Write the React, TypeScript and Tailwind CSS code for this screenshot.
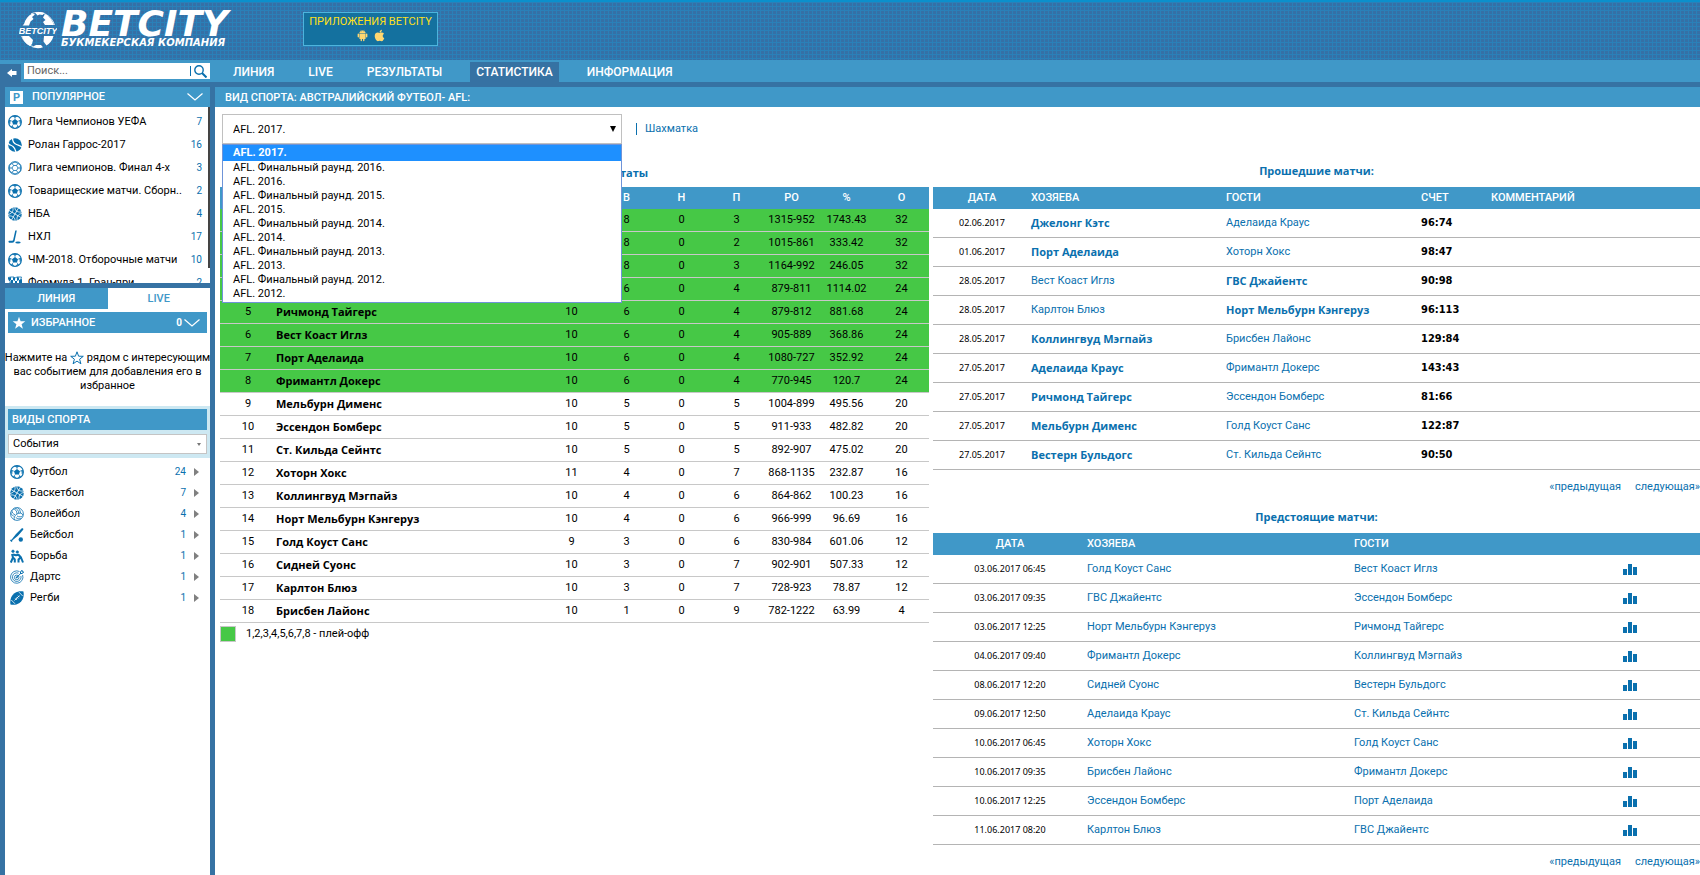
import type { ReactNode } from "react";
import { AiFillAndroid } from "react-icons/ai";
import { FaApple } from "react-icons/fa";

type IconProps = { className?: string };

function Soccer({ className = "" }: IconProps) {
  return (
    <svg viewBox="0 0 14 14" className={className} fill="none" stroke="#0a70ae">
      <circle cx="7" cy="7" r="6.4" strokeWidth="1.1" />
      <path d="M7 4 10 6.2 8.900 9.500H5.100L4 6.200Z" fill="#0a70ae" stroke="none" />
      <path d="M7 4V2M10 6.200 12 5.400M8.900 9.500 10 11.200M5.100 9.500 4 11.200M4 6.200 2 5.400" strokeWidth=".6" />
      <path d="M4.8 1.2 7 2.4 9.2 1.2ZM13 5 11.6 5.6 12.2 9ZM10.8 11.8 9.7 10.9 8.2 13ZM3.2 11.8 4.3 10.9 5.8 13ZM1 5 2.4 5.6 1.8 9Z" fill="#0a70ae" strokeWidth=".5" />
    </svg>
  );
}

function Tennis({ className = "" }: IconProps) {
  return (
    <svg viewBox="0 0 14 14" className={className} fill="none">
      <circle cx="7" cy="7" r="6.8" fill="#0a70ae" />
      <path d="M4.500 0C4.500 4 6 5.500 8.500 6.500s5 1.500 5.500 3M0 5c1 2 3 2 5 3.500S7.500 12 8 14" stroke="#fff" strokeWidth="1.300" />
    </svg>
  );
}

function Futsal({ className = "" }: IconProps) {
  return (
    <svg viewBox="0 0 14 14" className={className} fill="none" stroke="#0a70ae" strokeWidth=".8">
      <circle cx="7" cy="7" r="6.4" />
      <path d="M5.500 4.500h3L10 7 8.500 9.500h-3L4 7ZM5.500 4.500 4 2.300M8.500 4.500 10 2.300M10 7h2.400M8.500 9.500 10 11.700M5.500 9.500 4 11.700M4 7H1.600M4 2.300 7 1l3 1.300 2.400 2V10L10 11.700 7 13l-3-1.300L1.600 10V4.300Z" />
    </svg>
  );
}

function Basket({ className = "" }: IconProps) {
  return (
    <svg viewBox="0 0 14 14" className={className} fill="none">
      <circle cx="7" cy="7" r="6.8" fill="#0a70ae" />
      <path d="M1 3.500 13 10.500M10.500 1 3.500 13M4.500 0C6 3 4.500 6.500 0 7.500M14 6.500C10 7 8 10 9.500 14M7 0c-.5 3 2 5.500 6 5M1 9c3.500-.5 6.500 2 6 5" stroke="#fff" strokeWidth=".8" />
    </svg>
  );
}

function Hockey({ className = "" }: IconProps) {
  return (
    <svg viewBox="0 0 14 14" className={className} fill="#0a70ae">
      <path d="M7.300.500h1.500L6.700 10.500C6.400 12 5.500 12.700 4.300 12.700H1.200C.2 12.700.2 10.800 1.200 10.800H3.800C4.600 10.800 5 10.500 5.200 9.700Z" />
      <ellipse cx="10" cy="12.500" rx="2.700" ry="1" />
    </svg>
  );
}

function Flags({ className = "" }: IconProps) {
  return (
    <svg viewBox="0 0 14 14" className={className} fill="#0a70ae">
      <path d="M0 2 3 1v3L1 5ZM5 1l2 1v3L5 4ZM9 1l2 .5V4L9 5ZM3 4l2 0v3L3 8ZM7 5l2 0v3L7 8ZM11 4l3-1v4l-3 1ZM1 6l2 2 0 3-1 0Z" />
      <path d="M0 1.500 3 1h3l1 1 2-1h4.500l-2 7-2 1-2-1-2 1-2-1Z" fill="none" stroke="#0a70ae" strokeWidth=".8" />
      <path d="M1.500 7 4 14M12.500 7 10 14" stroke="#0a70ae" />
    </svg>
  );
}

function Volley({ className = "" }: IconProps) {
  return (
    <svg viewBox="0 0 14 14" className={className} fill="none" stroke="#0a70ae" strokeWidth=".8">
      <circle cx="7" cy="7" r="6.400" />
      <path d="M7 7C7 4 5.500 2 3 2M7 7c2.500-1.500 5-1 6 1M7 7c-2.500 1.500-3.500 4-2.500 6M8.800 6.200C8.500 3.500 7 1.500 4.800 1M10.500 6C10.200 3.200 9 1.500 7.500.700M7 9c2 1.300 4.500 1 5.800-.3M5.800 10.500C7.500 12 10 12.200 11.300 11.500M5.200 7.800C3 7 1.800 5.500 2 3.200M3.800 9.200C2 8.300 1 7.200.8 5.500" />
    </svg>
  );
}

function Baseball({ className = "" }: IconProps) {
  return (
    <svg viewBox="0 0 14 14" className={className} fill="#0a70ae">
      <path d="M11.800.300c1-.5 1.900.4 1.400 1.400L8 7.800 2.200 12.500l.3.600-1 .9L0 12.500l.9-1 .6.200L6 6Z" />
      <circle cx="10.800" cy="11.500" r="2.200" />
    </svg>
  );
}

function Wrestling({ className = "" }: IconProps) {
  return (
    <svg viewBox="0 0 14 14" className={className} fill="none" stroke="#0a70ae" strokeLinejoin="round">
      <circle cx="3" cy="2.300" r="1.300" fill="#0a70ae" strokeWidth=".5" />
      <circle cx="7.300" cy="3" r="1.300" fill="#0a70ae" strokeWidth=".5" />
      <path d="M2 5 3 8.500.800 13.500M3 8.500 4.800 10.500v3" strokeWidth="2" />
      <path d="M3 5.500 6 6.300 8.500 5.800 11 8.500 13 13.500M10.500 8.500 8.500 10.500V13.500" strokeWidth="2" />
    </svg>
  );
}

function Darts({ className = "" }: IconProps) {
  return (
    <svg viewBox="0 0 14 14" className={className} fill="none" stroke="#0a70ae" strokeWidth=".8">
      <path d="M9.500 1.500A6.200 6.200 0 1 0 12.600 5" />
      <path d="M8.500 3.200A4.300 4.300 0 1 0 10.900 6" />
      <circle cx="6.700" cy="7.400" r="2.300" />
      <circle cx="6.700" cy="7.400" r=".6" fill="#0a70ae" />
      <path d="M6.700 7.400 11 3.200M10.500 3.500V1.600L12.200.300v1.600h1.500L12.400 3.500Z" strokeWidth="1" />
    </svg>
  );
}

function Rugby({ className = "" }: IconProps) {
  return (
    <svg viewBox="0 0 14 14" className={className} fill="none">
      <path d="M13.500.500c.8 5-.5 9-4 11.500C6.500 14 3 14 .5 13.500-.3 9 1 5 4.500 2.300 7.500.2 11 0 13.500.500Z" fill="#0a70ae" />
      <path d="M4.500 9.500 9.500 4.500M5.200 7.400 6.800 9M6.600 6 8.200 7.600M8 4.700 9.500 6.200M1.300 9 5 12.800M9 1.200 12.700 5" stroke="#fff" strokeWidth=".8" />
    </svg>
  );
}

function Star({ className = "", filled = false }: IconProps & { filled?: boolean }) {
  return (
    <svg viewBox="0 0 14 14" className={className} fill={filled ? "currentColor" : "none"} stroke="currentColor" strokeWidth={filled ? 0 : 1}>
      <path d="M7 .8 8.600 5.200 13.300 5.300 9.600 8.200 10.900 12.800 7 10.100 3.100 12.800 4.400 8.200.7 5.300 5.400 5.200Z" />
    </svg>
  );
}

function Chevron() {
  return (
    <svg viewBox="0 0 16 8" className="h-2 w-4" fill="none" stroke="#fff" strokeWidth="1.200">
      <path d="M.5.500 8 7 15.500.500" />
    </svg>
  );
}

function Globe() {
  return (
    <svg viewBox="0 0 38 38" className="mt-px h-[38px] w-[38px] shrink-0" fill="#fff">
      <path d="M5 13C6.500 8 9 4.500 13.500 2.500l2.500 1-3 2.500 1.500 2-3 2.500-1.500 4H3.500ZM16 1.500c3-1 7-.5 9.500.500l-2 2-3-.5-2 1ZM26 3c4 2 7.500 6 9 11h-9l-2-3 2.500-2-2.500-2.500ZM3 25h7l4 4-1 4-2 2C7 33 4 29.500 3 25ZM13 36l4-2 5 0 2 2.300c-3.500 1.300-8 1-11-.3ZM25 25h9.500c-1 4-3.500 7.500-7 9.500l-3-4Z" />
      <path d="M14 35.500A17.300 17.300 0 0 1 2.500 25M35.500 14A17.300 17.300 0 0 0 12 2.800" fill="none" stroke="#fff" strokeWidth=".8" />
      <text x="19" y="22.500" textAnchor="middle" fontSize="9" fontWeight="700" fontStyle="italic" fontFamily="Liberation Sans, sans-serif">BETCITY</text>
    </svg>
  );
}

function Bars() {
  return (
    <svg viewBox="0 0 14 11" className="h-[11px] w-[14px]" fill="#0a70ae">
      <path d="M0 5h4v6H0ZM5 0h4v11H5ZM10 3h4v8h-4Z" />
    </svg>
  );
}

const nav = ["ЛИНИЯ", "LIVE", "РЕЗУЛЬТАТЫ", "СТАТИСТИКА", "ИНФОРМАЦИЯ"];

const popular = [
  { icon: Soccer, name: "Лига Чемпионов УЕФА", count: 7 },
  { icon: Tennis, name: "Ролан Гаррос-2017", count: 16 },
  { icon: Futsal, name: "Лига чемпионов. Финал 4-х", count: 3 },
  { icon: Soccer, name: "Товарищеские матчи. Сборн..", count: 2 },
  { icon: Basket, name: "НБА", count: 4 },
  { icon: Hockey, name: "НХЛ", count: 17 },
  { icon: Soccer, name: "ЧМ-2018. Отборочные матчи", count: 10 },
  { icon: Flags, name: "Формула 1. Гран-при", count: 2 },
];

const sports = [
  { icon: Soccer, name: "Футбол", count: 24 },
  { icon: Basket, name: "Баскетбол", count: 7 },
  { icon: Volley, name: "Волейбол", count: 4 },
  { icon: Baseball, name: "Бейсбол", count: 1 },
  { icon: Wrestling, name: "Борьба", count: 1 },
  { icon: Darts, name: "Дартс", count: 1 },
  { icon: Rugby, name: "Регби", count: 1 },
];

const seasons = [
  "AFL. 2017.",
  "AFL. Финальный раунд. 2016.",
  "AFL. 2016.",
  "AFL. Финальный раунд. 2015.",
  "AFL. 2015.",
  "AFL. Финальный раунд. 2014.",
  "AFL. 2014.",
  "AFL. Финальный раунд. 2013.",
  "AFL. 2013.",
  "AFL. Финальный раунд. 2012.",
  "AFL. 2012.",
];

// team, games, won, drawn, lost, scored, percent, points
const standings: [string, number, number, number, number, string, string, number][] = [
  ["Аделаида Краус", 11, 8, 0, 3, "1315-952", "1743.43", 32],
  ["ГВС Джайентс", 10, 8, 0, 2, "1015-861", "333.42", 32],
  ["Джелонг Кэтс", 11, 8, 0, 3, "1164-992", "246.05", 32],
  ["Вестерн Бульдогс", 10, 6, 0, 4, "879-811", "1114.02", 24],
  ["Ричмонд Тайгерс", 10, 6, 0, 4, "879-812", "881.68", 24],
  ["Вест Коаст Иглз", 10, 6, 0, 4, "905-889", "368.86", 24],
  ["Порт Аделаида", 10, 6, 0, 4, "1080-727", "352.92", 24],
  ["Фримантл Докерс", 10, 6, 0, 4, "770-945", "120.7", 24],
  ["Мельбурн Дименс", 10, 5, 0, 5, "1004-899", "495.56", 20],
  ["Эссендон Бомберс", 10, 5, 0, 5, "911-933", "482.82", 20],
  ["Ст. Кильда Сейнтс", 10, 5, 0, 5, "892-907", "475.02", 20],
  ["Хоторн Хокс", 11, 4, 0, 7, "868-1135", "232.87", 16],
  ["Коллингвуд Мэгпайз", 10, 4, 0, 6, "864-862", "100.23", 16],
  ["Норт Мельбурн Кэнгеруз", 10, 4, 0, 6, "966-999", "96.69", 16],
  ["Голд Коуст Санс", 9, 3, 0, 6, "830-984", "601.06", 12],
  ["Сидней Суонс", 10, 3, 0, 7, "902-901", "507.33", 12],
  ["Карлтон Блюз", 10, 3, 0, 7, "728-923", "78.87", 12],
  ["Брисбен Лайонс", 10, 1, 0, 9, "782-1222", "63.99", 4],
];

const past = [
  ["02.06.2017", "Джелонг Кэтс", "Аделаида Краус", "96:74"],
  ["01.06.2017", "Порт Аделаида", "Хоторн Хокс", "98:47"],
  ["28.05.2017", "Вест Коаст Иглз", "ГВС Джайентс", "90:98"],
  ["28.05.2017", "Карлтон Блюз", "Норт Мельбурн Кэнгеруз", "96:113"],
  ["28.05.2017", "Коллингвуд Мэгпайз", "Брисбен Лайонс", "129:84"],
  ["27.05.2017", "Аделаида Краус", "Фримантл Докерс", "143:43"],
  ["27.05.2017", "Ричмонд Тайгерс", "Эссендон Бомберс", "81:66"],
  ["27.05.2017", "Мельбурн Дименс", "Голд Коуст Санс", "122:87"],
  ["27.05.2017", "Вестерн Бульдогс", "Ст. Кильда Сейнтс", "90:50"],
];

const upcoming = [
  ["03.06.2017 06:45", "Голд Коуст Санс", "Вест Коаст Иглз"],
  ["03.06.2017 09:35", "ГВС Джайентс", "Эссендон Бомберс"],
  ["03.06.2017 12:25", "Норт Мельбурн Кэнгеруз", "Ричмонд Тайгерс"],
  ["04.06.2017 09:40", "Фримантл Докерс", "Коллингвуд Мэгпайз"],
  ["08.06.2017 12:20", "Сидней Суонс", "Вестерн Бульдогс"],
  ["09.06.2017 12:50", "Аделаида Краус", "Ст. Кильда Сейнтс"],
  ["10.06.2017 06:45", "Хоторн Хокс", "Голд Коуст Санс"],
  ["10.06.2017 09:35", "Брисбен Лайонс", "Фримантл Докерс"],
  ["10.06.2017 12:25", "Эссендон Бомберс", "Порт Аделаида"],
  ["11.06.2017 08:20", "Карлтон Блюз", "ГВС Джайентс"],
];

const boldText = "p-0 font-['Open_Sans'] font-bold";

function Header() {
  return (
    <header className="flex h-[60px] border-t-2 border-[#0a90cc] bg-[#3570a6] bg-[linear-gradient(#2a80b8_1px,transparent_1px),linear-gradient(90deg,#2a80b8_1px,transparent_1px)] bg-[size:4px_4px]">
      <a href="#" className="ml-[19px] flex w-[224px] items-start pt-2 text-white">
        <Globe />
        <span className="ml-1 block font-['DejaVu_Sans'] font-bold italic">
          <span className="block text-[36px] leading-[28px]">BETCITY</span>
          <span className="block text-[10px] leading-[10px]">БУКМЕКЕРСКАЯ КОМПАНИЯ</span>
        </span>
      </a>
      <a href="#" className="mt-[10px] ml-[60px] flex h-[34px] w-[135px] flex-col items-center border border-[#4db4dc] bg-[#14719f] pt-[2px] text-[#ffe01a]">
        <span className="text-[11px] leading-[14px]">ПРИЛОЖЕНИЯ BETCITY</span>
        <span className="flex gap-1 text-[13px] text-[#ffd770]">
          <AiFillAndroid /> <FaApple />
        </span>
      </a>
    </header>
  );
}

function NavBar() {
  return (
    <div className="flex h-[22px] items-end bg-[#4098c8]">
      <button type="button" aria-label="Назад" className="flex h-[18px] w-[21px] items-center justify-end bg-[#3672a3] pr-1">
        <svg viewBox="0 0 10 8" className="h-2 w-[10px]" fill="#fff">
          <path d="M0 4 5 0v2h4.500v4H5v2Z" />
        </svg>
      </button>
      <form className="mb-[3px] ml-[3px] flex h-4 w-[186px] items-center bg-white pr-[3px]">
        <input type="text" aria-label="Поиск" placeholder="Поиск..." className="min-w-0 flex-1 px-[3px] text-[11px] leading-4 outline-none placeholder:text-[#666]" />
        <button type="button" aria-label="Найти" className="flex items-center">
          <span className="mr-[3px] h-[10px] w-px bg-[#0a70ae]" />
          <svg viewBox="0 0 13 13" className="h-[13px] w-[13px]" fill="none" stroke="#0a70ae">
            <circle cx="5" cy="5" r="4.200" strokeWidth="1.400" />
            <path d="M8 8 12.500 12.500" strokeWidth="2" />
          </svg>
        </button>
      </form>
      <nav className="ml-[17px] flex gap-[22px] text-[12px] leading-5 font-medium text-white">
        {nav.map((item) => (
          <a key={item} href="#" className={item === "СТАТИСТИКА" ? "bg-[#3672a3] px-[6px]" : "px-[6px]"}>
            {item}
          </a>
        ))}
      </nav>
    </div>
  );
}

function Sidebar() {
  return (
    <aside className="flex w-[215px] shrink-0 flex-col border-x-[5px] border-[#3672a3] bg-white text-[11px]">
      <button type="button" className="flex h-5 shrink-0 items-center bg-[#4098c8] pr-[7px] pl-[5px] font-medium text-white">
        <span className="mr-[9px] flex h-[13px] w-[13px] items-center justify-center bg-white text-[11px] leading-none font-bold text-[#4098c8]">P</span>
        ПОПУЛЯРНОЕ
        <span className="ml-auto">
          <Chevron />
        </span>
      </button>
      <div className="flex h-[176px] items-start overflow-hidden">
        <ul className="flex-1 pt-[3px]">
          {popular.map(({ icon: Icon, name, count }) => (
            <li key={name}>
              <a href="#" className="flex h-[23px] items-center pr-[6px] pl-[3px]">
                <Icon className="mr-[6px] h-[14px] w-[14px]" />
                {name}
                <span className="ml-auto text-[10px] text-[#0a70ae]">{count}</span>
              </a>
            </li>
          ))}
        </ul>
        <div className="h-[161px] w-[2px] bg-[#444]" />
      </div>
      <div className="grid h-[26px] grid-cols-2 border-t-[5px] border-[#3672a3] leading-[21px] font-medium">
        <button type="button" className="bg-[#4098c8] text-white">ЛИНИЯ</button>
        <button type="button" className="text-[#4098c8]">LIVE</button>
      </div>
      <button type="button" className="mx-[3px] mt-[3px] flex h-[21px] shrink-0 items-center bg-[#4098c8] pr-[7px] pl-1 font-medium text-white">
        <Star filled className="mr-[5px] h-[14px] w-[14px]" />
        ИЗБРАННОЕ
        <span className="mr-[2px] ml-auto text-[10px] font-bold">0</span>
        <Chevron />
      </button>
      <p className="-mx-1 mt-[18px] mb-[13px] text-center leading-[14px]">
        Нажмите на <Star className="inline h-[14px] w-[14px] text-[#0a70ae]" /> рядом с интересующим вас событием для добавления его в избранное
      </p>
      <div className="h-[52px] bg-[#cde8f2] p-[3px]">
        <h2 className="mb-[4px] h-[21px] bg-[#4098c8] pl-1 leading-[21px] font-medium text-white">ВИДЫ СПОРТА</h2>
        <div className="grid items-center">
          <select aria-label="Виды спорта" className="col-start-1 row-start-1 h-5 appearance-none border border-[#c4c4c4] bg-white pl-[4px] outline-none">
            <option>События</option>
          </select>
          <span className="pointer-events-none col-start-1 row-start-1 mr-[6px] justify-self-end border-x-2 border-t-[3px] border-x-transparent border-t-[#777]" />
        </div>
      </div>
      <ul className="pt-[3px]">
        {sports.map(({ icon: Icon, name, count }) => (
          <li key={name}>
            <a href="#" className="flex h-[21px] items-center pr-[11px] pl-[5px]">
              <Icon className="mr-[6px] h-[14px] w-[14px]" />
              {name}
              <span className="mr-2 ml-auto text-[10px] text-[#0a70ae]">{count}</span>
              <span className="border-y-4 border-l-[5px] border-y-transparent border-l-[#808080]" />
            </a>
          </li>
        ))}
      </ul>
    </aside>
  );
}

function SeasonSelect() {
  return (
    <div className="flex h-[37px] items-end">
      <div className="relative ml-[2px] w-[400px]">
        <select aria-label="Сезон" className="block h-[30px] w-full appearance-none border border-[#c0c0c0] bg-white pt-px pl-[10px] outline-none">
          <option>{seasons[0]}</option>
        </select>
        <span className="pointer-events-none absolute top-3 right-[6px] border-x-[3px] border-t-[6px] border-x-transparent border-t-black" />
        <ul role="listbox" aria-label="Сезоны" className="absolute top-full left-0 z-10 w-full border border-[#6f94d8] bg-white pb-px">
          {seasons.map((season, i) => (
            <li
              key={season}
              role="option"
              aria-selected={i === 0}
              className={i === 0 ? "bg-[#1e90ff] pl-[10px] leading-4 font-bold text-white" : "pl-[10px] leading-[14px]"}>
              {season}
            </li>
          ))}
        </ul>
      </div>
      <div className="ml-[14px] flex h-[30px] items-center text-[#0a70ae]">
        <span className="mr-2 h-3 w-px bg-[#0a70ae]" />
        <a href="#">Шахматка</a>
      </div>
    </div>
  );
}

function Th({ children, left = false }: { children?: ReactNode; left?: boolean }) {
  return <th className={left ? "p-0 text-left font-medium" : "p-0 text-center font-medium"}>{children}</th>;
}

function Standings() {
  return (
    <section>
      <h2 className="flex h-[43px] items-end justify-center pb-[7px] font-['Open_Sans'] font-bold text-[#0a70ae]">AFL. 2017. Все результаты</h2>
      <table className="w-full table-fixed border-separate border-spacing-0">
        <colgroup>
          <col className="w-[56px]" />
          <col />
          {["И", "В", "Н", "П", "РО", "%", "О"].map((c) => (
            <col key={c} className="w-[55px]" />
          ))}
        </colgroup>
        <thead className="bg-[#4098c8] text-white">
          <tr className="h-[22px]">
            <Th>№</Th>
            <Th left>КОМАНДА</Th>
            {["И", "В", "Н", "П", "РО", "%", "О"].map((c) => (
              <Th key={c}>{c}</Th>
            ))}
          </tr>
        </thead>
        <tbody className="[&_td]:border-b [&_td]:border-[#c8c8c8]">
          {standings.map(([team, ...cells], i) => (
            <tr key={team} className={i < 8 ? "h-[23px] bg-[#46c846] text-center" : "h-[23px] text-center"}>
              <td className="p-0">{i + 1}</td>
              <td className="p-0 text-left font-['Open_Sans'] font-bold">{team}</td>
              {cells.map((cell, j) => (
                <td key={j} className="p-0">{cell}</td>
              ))}
            </tr>
          ))}
        </tbody>
      </table>
      <div className="flex items-center pt-[3px]">
        <span className="mr-[10px] h-4 w-4 border border-[#c8c8c8] bg-[#46c846]" />
        1,2,3,4,5,6,7,8 - плей-офф
      </div>
    </section>
  );
}

function Pager() {
  return (
    <div className="flex h-[34px] items-center justify-end gap-[14px] text-[#0a70ae]">
      <a href="#">«предыдущая</a>
      <a href="#">следующая»</a>
    </div>
  );
}

function PastMatches() {
  return (
    <section>
      <h2 className="flex h-[43px] items-end justify-center pb-[9px] font-['Open_Sans'] font-bold text-[#0a70ae]">Прошедшие матчи:</h2>
      <table className="w-full table-fixed border-separate border-spacing-0">
        <colgroup>
          <col className="w-[98px]" />
          <col className="w-[195px]" />
          <col className="w-[195px]" />
          <col className="w-[70px]" />
          <col />
        </colgroup>
        <thead className="bg-[#4098c8] text-white">
          <tr className="h-[22px]">
            <Th>ДАТА</Th>
            <Th left>ХОЗЯЕВА</Th>
            <Th left>ГОСТИ</Th>
            <Th left>СЧЕТ</Th>
            <Th left>КОММЕНТАРИЙ</Th>
          </tr>
        </thead>
        <tbody className="[&_td]:border-b [&_td]:border-[#b4b4b4]">
          {past.map(([date, home, away, score]) => {
            const [h, a] = score.split(":").map(Number);
            return (
              <tr key={home} className="h-[29px] text-[#0a70ae]">
                <td className="p-0 text-center font-['Noto_Sans'] text-[9px] text-black">{date}</td>
                <td className={h > a ? boldText : "p-0"}><a href="#">{home}</a></td>
                <td className={a > h ? boldText : "p-0"}><a href="#">{away}</a></td>
                <td className="p-0 font-['DejaVu_Sans_Condensed','Open_Sans'] font-bold text-black">{score}</td>
                <td className="p-0" />
              </tr>
            );
          })}
        </tbody>
      </table>
      <Pager />
    </section>
  );
}

function UpcomingMatches() {
  return (
    <section>
      <h2 className="flex h-[29px] items-center justify-center pb-[3px] font-['Open_Sans'] font-bold text-[#0a70ae]">Предстоящие матчи:</h2>
      <table className="w-full table-fixed border-separate border-spacing-0">
        <colgroup>
          <col className="w-[154px]" />
          <col className="w-[267px]" />
          <col className="w-[267px]" />
          <col />
        </colgroup>
        <thead className="bg-[#4098c8] text-white">
          <tr className="h-[22px]">
            <Th>ДАТА</Th>
            <Th left>ХОЗЯЕВА</Th>
            <Th left>ГОСТИ</Th>
            <Th />
          </tr>
        </thead>
        <tbody className="[&_td]:border-b [&_td]:border-[#b4b4b4]">
          {upcoming.map(([date, home, away]) => (
            <tr key={home} className="h-[29px] text-[#0a70ae]">
              <td className="p-0 text-center font-['Noto_Sans'] text-[9px] text-black">{date}</td>
              <td className="p-0"><a href="#">{home}</a></td>
              <td className="p-0"><a href="#">{away}</a></td>
              <td className="p-0 pl-[2px]">
                <a href="#" aria-label="Статистика матча" className="block w-[14px]"><Bars /></a>
              </td>
            </tr>
          ))}
        </tbody>
      </table>
      <Pager />
    </section>
  );
}

export default function App() {
  return (
    <div className="flex min-h-screen flex-col bg-white font-['Roboto','Noto_Sans',sans-serif] text-[11px] leading-[14px] text-black">
      <Header />
      <NavBar />
      <div className="flex flex-1 border-t-[5px] border-[#3672a3]">
        <Sidebar />
        <main className="min-w-0 flex-1">
          <h1 className="h-5 bg-[#4098c8] pl-[10px] leading-[22px] font-medium text-white">ВИД СПОРТА: АВСТРАЛИЙСКИЙ ФУТБОЛ- AFL:</h1>
          <div className="pl-[5px]">
            <SeasonSelect />
            <div className="grid grid-cols-[709fr_767fr] gap-1">
              <Standings />
              <div>
                <PastMatches />
                <UpcomingMatches />
              </div>
            </div>
          </div>
        </main>
      </div>
    </div>
  );
}
